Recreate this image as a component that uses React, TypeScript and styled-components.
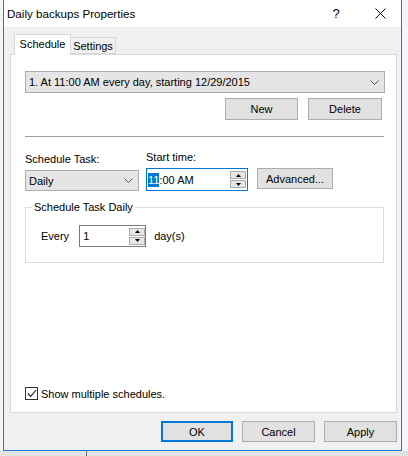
import styled, { createGlobalStyle } from "styled-components";

const Global = createGlobalStyle`
  html, body { margin: 0; padding: 0; }
  body {
    font-family: "Liberation Sans", Arial, sans-serif;
    font-size: 11px;
    color: #000;
    background: #e4e4e4;
  }
`;

const Desk = styled.div`
  position: relative;
  width: 408px;
  height: 456px;
  padding-left: 3px;
  box-sizing: border-box;
  background: linear-gradient(to bottom, #f3f5f8 0, #f3f5f8 451px, #e2e2e2 451px);
  overflow: hidden;

  &::after {
    content: "";
    position: absolute;
    left: 86px;
    top: 451px;
    width: 1px;
    height: 5px;
    background: #6b6b6b;
  }
`;

const Window = styled.div`
  width: 399px;
  height: 451px;
  box-sizing: border-box;
  border: 1px solid #1a7ad4;
  border-top: none;
  display: flex;
  flex-direction: column;
  background: #f0f0f0;
`;

const TitleBar = styled.div`
  height: 27px;
  background: #fff;
  display: flex;
  align-items: center;
  flex-shrink: 0;
`;

const Title = styled.div`
  flex: 1;
  padding-left: 3px;
  font-size: 11.6px;
  line-height: 27px;
`;

const CaptionButton = styled.div<{ $w: number }>`
  width: ${(p) => p.$w}px;
  height: 27px;
  display: flex;
  align-items: center;
  justify-content: center;
  font-size: 13px;
`;

const Body = styled.div`
  flex: 1;
  display: flex;
  flex-direction: column;
  padding: 7px 4px 0 6px;
`;

const TabStrip = styled.div`
  display: flex;
  align-items: flex-end;
  height: 20px;
  padding-left: 4px;
`;

const Tab = styled.div<{ $active?: boolean; $w: number }>`
  position: relative;
  z-index: ${(p) => (p.$active ? 1 : 0)};
  width: ${(p) => p.$w}px;
  height: ${(p) => (p.$active ? 21 : 17)}px;
  margin-bottom: ${(p) => (p.$active ? -1 : 0)}px;
  box-sizing: border-box;
  border: 1px solid #d9d9d9;
  border-bottom: ${(p) => (p.$active ? "none" : "1px solid #d9d9d9")};
  border-left: ${(p) => (p.$active ? "1px solid #d9d9d9" : "none")};
  background: ${(p) => (p.$active ? "#fff" : "#f0f0f0")};
  display: flex;
  align-items: ${(p) => (p.$active ? "flex-start" : "center")};
  padding-top: ${(p) => (p.$active ? 3 : 0)}px;
  justify-content: center;
`;

const Panel = styled.div`
  height: 359px;
  box-sizing: border-box;
  background: #fff;
  border: 1px solid #d9d9d9;
  padding: 16px 11px 12px 14px;
  display: flex;
  flex-direction: column;
`;

const Combo = styled.div<{ $w?: number; $h?: number }>`
  width: ${(p) => (p.$w ? `${p.$w}px` : "auto")};
  height: ${(p) => p.$h || 22}px;
  box-sizing: border-box;
  background: #e5e5e5;
  border: 1px solid #acacac;
  display: flex;
  align-items: center;
  padding: 0 5px 0 3px;
`;

const ComboText = styled.span`
  flex: 1;
  white-space: nowrap;
`;

const ButtonRow = styled.div<{ $gap: number }>`
  display: flex;
  justify-content: flex-end;
  gap: ${(p) => p.$gap}px;
`;

const Button = styled.div<{ $w: number; $h?: number; $default?: boolean }>`
  width: ${(p) => p.$w}px;
  height: ${(p) => p.$h || 22}px;
  box-sizing: border-box;
  background: #e1e1e1;
  border: ${(p) => (p.$default ? "2px solid #0078d7" : "1px solid #adadad")};
  display: flex;
  align-items: center;
  justify-content: center;
`;

const Separator = styled.div`
  margin: 16px 1px 0 0;
  border-top: 1px solid #a0a0a0;
`;

const FieldRow = styled.div`
  display: flex;
  align-items: flex-end;
  margin-top: 13px;
`;

const Field = styled.div<{ $w: number; $mr: number }>`
  width: ${(p) => p.$w}px;
  margin-right: ${(p) => p.$mr}px;
  display: flex;
  flex-direction: column;
  gap: 3px;
`;

const Label = styled.div`
  line-height: 15px;
  white-space: nowrap;
`;

const TimeBox = styled.div`
  height: 23px;
  box-sizing: border-box;
  border: 1px solid #0078d7;
  display: flex;
  align-items: center;
  padding: 0 1px 0 1px;
`;

const Selected = styled.span`
  background: #0078d7;
  color: #fff;
  padding: 1px 0;
`;

const NumBox = styled.div`
  width: 67px;
  height: 22px;
  box-sizing: border-box;
  border: 1px solid #7a7a7a;
  display: flex;
  align-items: center;
  padding-left: 3px;
`;

const Spinner = styled.div`
  width: 16px;
  height: 17px;
  display: flex;
  flex-direction: column;
  gap: 1px;
`;

const SpinPart = styled.div`
  flex: 1;
  box-sizing: border-box;
  background: #e6e6e6;
  border: 1px solid #adadad;
  display: flex;
  align-items: center;
  justify-content: center;
`;

const Group = styled.fieldset`
  margin: 9px 1px 0 0;
  padding: 10px 0 15px 0;
  border: 1px solid #dcdcdc;
  min-width: 0;
`;

const Legend = styled.legend`
  margin-left: 6px;
  padding: 0 2px;
  line-height: 15px;
`;

const EveryRow = styled.div`
  display: flex;
  align-items: center;
  padding-left: 15px;
`;

const Spacer = styled.span<{ $w: number }>`
  display: inline-block;
  width: ${(p) => p.$w}px;
`;

const CheckRow = styled.div`
  margin-top: auto;
  display: flex;
  align-items: center;
  gap: 3px;
`;

const CheckBox = styled.div`
  width: 13px;
  height: 13px;
  box-sizing: border-box;
  border: 1px solid #333;
  display: flex;
  align-items: center;
  justify-content: center;
  background: #fff;
`;

const Footer = styled.div`
  margin-top: 8px;
`;

const Chevron = () => (
  <svg width="9" height="5" viewBox="0 0 9 5">
    <polyline points="0.5,0.5 4.5,4.5 8.5,0.5" fill="none" stroke="#555" strokeWidth="1" />
  </svg>
);

const Arrow = ({ up }: { up?: boolean }) => (
  <svg width="5" height="3" viewBox="0 0 5 3">
    <polygon points={up ? "2.5,0 5,3 0,3" : "0,0 5,0 2.5,3"} fill="#000" />
  </svg>
);

const Spin = () => (
  <Spinner>
    <SpinPart>
      <Arrow up />
    </SpinPart>
    <SpinPart>
      <Arrow />
    </SpinPart>
  </Spinner>
);

export default function App() {
  return (
    <>
      <Global />
      <Desk>
        <Window>
          <TitleBar>
            <Title>Daily backups Properties</Title>
            <CaptionButton $w={46}>?</CaptionButton>
            <CaptionButton $w={42}>
              <svg width="11" height="11" viewBox="0 0 11 11">
                <path d="M0.5 0.5 L10.5 10.5 M10.5 0.5 L0.5 10.5" stroke="#000" strokeWidth="1" />
              </svg>
            </CaptionButton>
          </TitleBar>
          <Body>
            <TabStrip>
              <Tab $active $w={57}>Schedule</Tab>
              <Tab $w={45}>Settings</Tab>
            </TabStrip>
            <Panel>
              <Combo>
                <ComboText>1. At 11:00 AM every day, starting 12/29/2015</ComboText>
                <Chevron />
              </Combo>
              <ButtonRow $gap={10} style={{ marginTop: 5, paddingRight: 3 }}>
                <Button $w={73}>New</Button>
                <Button $w={74}>Delete</Button>
              </ButtonRow>
              <Separator />
              <FieldRow>
                <Field $w={114} $mr={7}>
                  <Label>Schedule Task:</Label>
                  <Combo $w={114} $h={21}>
                    <ComboText>Daily</ComboText>
                    <Chevron />
                  </Combo>
                </Field>
                <Field $w={102} $mr={9}>
                  <Label>Start time:</Label>
                  <TimeBox>
                    <ComboText>
                      <Selected>11</Selected>:00 AM
                    </ComboText>
                    <Spin />
                  </TimeBox>
                </Field>
                <Button $w={76} $h={21} style={{ marginBottom: 2 }}>
                  Advanced...
                </Button>
              </FieldRow>
              <Group>
                <Legend>Schedule Task Daily</Legend>
                <EveryRow>
                  Every
                  <Spacer $w={10} />
                  <NumBox>
                    <ComboText>1</ComboText>
                    <Spin />
                  </NumBox>
                  <Spacer $w={8} />
                  day(s)
                </EveryRow>
              </Group>
              <CheckRow>
                <CheckBox>
                  <svg width="10" height="9" viewBox="0 0 10 9">
                    <polyline points="0.8,4.5 3.6,7.4 9.2,1" fill="none" stroke="#222" strokeWidth="1.1" />
                  </svg>
                </CheckBox>
                Show multiple schedules.
              </CheckRow>
            </Panel>
            <Footer>
              <ButtonRow $gap={9}>
                <Button $w={72} $h={21} $default>OK</Button>
                <Button $w={73} $h={21}>Cancel</Button>
                <Button $w={73} $h={21}>Apply</Button>
              </ButtonRow>
            </Footer>
          </Body>
        </Window>
      </Desk>
    </>
  );
}
